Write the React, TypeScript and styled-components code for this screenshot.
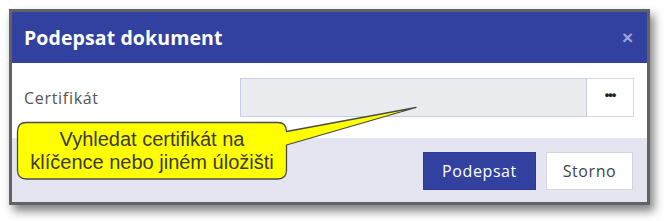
import styled, { createGlobalStyle } from "styled-components";

const GlobalStyle = createGlobalStyle`
  html, body {
    margin: 0;
    padding: 0;
    background: #ffffff;
  }
  body {
    font-family: "Open Sans", "Noto Sans", sans-serif;
  }
`;

const Page = styled.div`
  position: relative;
  width: 665px;
  height: 221px;
  overflow: hidden;
  padding: 9px 0 0 9px;
  box-sizing: border-box;
`;

const Dialog = styled.section`
  width: 641px;
  box-sizing: border-box;
  border: 3px solid #626262;
  background: #ffffff;
  box-shadow: 4px 6px 9px rgba(0, 0, 0, 0.5);
  display: flex;
  flex-direction: column;
`;

const Header = styled.header`
  height: 51px;
  background: #3240a0;
  display: flex;
  align-items: center;
  justify-content: space-between;
  padding: 0 14px 0 12px;
  box-sizing: border-box;
`;

const Title = styled.h1`
  margin: 0;
  color: #ffffff;
  font-size: 19.5px;
  font-weight: 700;
  letter-spacing: 0.1px;
`;

const CloseButton = styled.button`
  appearance: none;
  border: 0;
  background: transparent;
  padding: 0;
  color: #9ea6d8;
  font-family: "Liberation Sans", Arial, sans-serif;
  font-size: 19px;
  font-weight: 700;
  line-height: 1;
  cursor: pointer;
`;

const Body = styled.div`
  height: 75px;
  box-sizing: border-box;
  padding: 15px 13px 0 12px;
  display: flex;
  align-items: flex-start;
`;

const Label = styled.label`
  width: 216px;
  flex: 0 0 216px;
  height: 39px;
  display: flex;
  align-items: center;
  color: #555555;
  font-size: 16px;
  letter-spacing: 0.7px;
`;

const InputGroup = styled.div`
  flex: 1;
  display: flex;
  height: 39px;
`;

const CertInput = styled.div`
  flex: 1;
  box-sizing: border-box;
  background: #ebecef;
  border: 1px solid #c7cce8;
`;

const BrowseButton = styled.button`
  appearance: none;
  width: 47px;
  box-sizing: border-box;
  background: #ffffff;
  border: 1px solid #d6d8e4;
  border-left: 0;
  color: #222222;
  font-family: "Liberation Sans", Arial, sans-serif;
  font-size: 13px;
  font-weight: 700;
  letter-spacing: -1px;
  padding: 0 0 6px;
`;

const Footer = styled.footer`
  height: 64px;
  box-sizing: border-box;
  background: #e4e5f1;
  display: flex;
  justify-content: flex-end;
  align-items: flex-start;
  gap: 10px;
  padding: 14px 14px 0 0;
`;

const Button = styled.button<{ $primary?: boolean }>`
  appearance: none;
  height: 38px;
  width: ${({ $primary }) => ($primary ? "113px" : "87px")};
  box-sizing: border-box;
  border: 1px solid ${({ $primary }) => ($primary ? "#2d3a96" : "#d2d4e2")};
  background: ${({ $primary }) => ($primary ? "#3240a0" : "#ffffff")};
  color: ${({ $primary }) => ($primary ? "#ffffff" : "#444444")};
  font-family: "Open Sans", "Noto Sans", sans-serif;
  font-size: 16px;
  font-weight: 500;
  letter-spacing: 0.6px;
  padding: 0;
  cursor: pointer;
`;

const Callout = styled.div`
  position: absolute;
  left: 0;
  top: 0;
  width: 665px;
  height: 221px;
  pointer-events: none;
`;

const CalloutText = styled.div`
  position: absolute;
  left: 17px;
  top: 122px;
  width: 270px;
  height: 57px;
  display: flex;
  flex-direction: column;
  align-items: center;
  justify-content: center;
  color: #3a3a3a;
  font-family: "Liberation Sans", Arial, sans-serif;
  font-size: 20px;
  line-height: 23px;
  text-align: center;
`;

export default function App() {
  return (
    <>
      <GlobalStyle />
      <Page>
        <Dialog role="dialog" aria-label="Podepsat dokument">
          <Header>
            <Title>Podepsat dokument</Title>
            <CloseButton type="button" aria-label="Zavřít">
              ×
            </CloseButton>
          </Header>
          <Body>
            <Label>Certifikát</Label>
            <InputGroup>
              <CertInput />
              <BrowseButton type="button">•••</BrowseButton>
            </InputGroup>
          </Body>
          <Footer>
            <Button $primary type="button">
              Podepsat
            </Button>
            <Button type="button">Storno</Button>
          </Footer>
        </Dialog>
        <Callout>
          <svg width="665" height="221" viewBox="0 0 665 221">
            <path
              d="M26.5 122.5 H277.5 Q286.5 122.5 286.5 131.5 L416 107.5 L286.5 145 V170 Q286.5 179 277.5 179 H26.5 Q17.5 179 17.5 170 V131.5 Q17.5 122.5 26.5 122.5 Z"
              fill="#ffff00"
              stroke="#4a4a4a"
              strokeWidth="1.3"
              strokeLinejoin="round"
            />
          </svg>
          <CalloutText>
            <span>Vyhledat certifikát na</span>
            <span>klíčence nebo jiném úložišti</span>
          </CalloutText>
        </Callout>
      </Page>
    </>
  );
}
